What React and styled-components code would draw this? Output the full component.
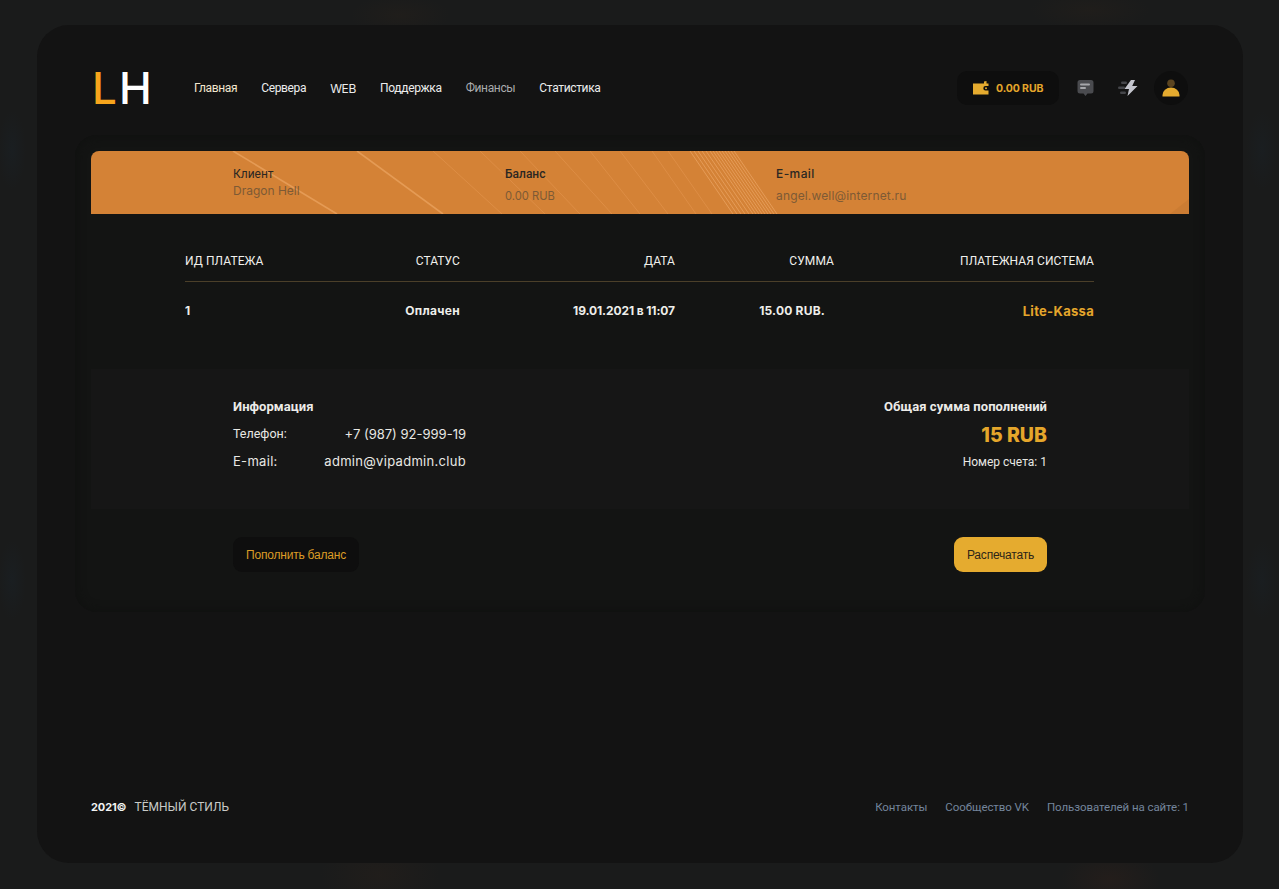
import React from "react";
import styled, { createGlobalStyle } from "styled-components";

const Global = createGlobalStyle`
  html, body {
    margin: 0;
    padding: 0;
    height: 100%;
  }
  body {
    background-color: #1a1b1b;
    background-image:
      radial-gradient(ellipse 60px 40px at 380px 875px, rgba(90, 50, 25, 0.1), transparent),
      radial-gradient(ellipse 50px 30px at 1110px 880px, rgba(100, 45, 25, 0.13), transparent),
      radial-gradient(ellipse 60px 20px at 1090px 10px, rgba(80, 50, 25, 0.1), transparent),
      radial-gradient(ellipse 50px 20px at 400px 15px, rgba(80, 50, 25, 0.1), transparent),
      radial-gradient(ellipse 14px 40px at 12px 150px, rgba(25, 50, 70, 0.14), transparent),
      radial-gradient(ellipse 14px 40px at 12px 580px, rgba(25, 50, 70, 0.14), transparent),
      radial-gradient(ellipse 16px 40px at 1262px 150px, rgba(25, 50, 70, 0.12), transparent),
      radial-gradient(ellipse 16px 40px at 1262px 580px, rgba(25, 50, 70, 0.12), transparent);
    background-repeat: no-repeat;
    font-family: Roboto, "Liberation Sans", sans-serif;
  }
`;

const Frame = styled.div`
  box-sizing: border-box;
  display: flex;
  flex-direction: column;
  width: 1206px;
  height: 838px;
  margin: 25px 0 26px 37px;
  padding: 46px 54px 0;
  background: #131313;
  border-radius: 32px;
`;

const Header = styled.header`
  display: flex;
  align-items: center;
  height: 34px;
`;

const Logo = styled.div`
  width: 103px;
  box-sizing: border-box;
  padding-left: 1px;
  font-family: Inter, sans-serif;
  font-size: 44px;
  font-weight: 500;
  line-height: 34px;
  letter-spacing: 2px;
  color: #fff;
  span {
    color: #f7a51c;
  }
`;

const Nav = styled.nav`
  display: flex;
  gap: 24px;
`;

const NavLink = styled.a`
  font-family: ${(p) => (p.$latin ? "Inter, sans-serif" : "Roboto, sans-serif")};
  font-size: 12px;
  letter-spacing: -0.35px;
  color: ${(p) => (p.$dim ? "#a9abad" : p.$active ? "#f3e7cf" : "#eceded")};
`;

const Tools = styled.div`
  display: flex;
  align-items: center;
  margin-left: auto;
  margin-right: 1px;
`;

const Wallet = styled.div`
  display: flex;
  align-items: center;
  gap: 7px;
  width: 102px;
  height: 34px;
  box-sizing: border-box;
  padding-left: 16px;
  background: #0e0e0e;
  border-radius: 10px;
  font-family: Inter, sans-serif;
  font-size: 10.5px;
  font-weight: 700;
  letter-spacing: -0.1px;
  color: #e5a62b;
`;

const ToolIcon = styled.div`
  display: flex;
  align-items: center;
  justify-content: center;
  width: ${(p) => p.$w}px;
  height: 34px;
`;

const Avatar = styled.div`
  display: flex;
  align-items: center;
  justify-content: center;
  width: 34px;
  height: 34px;
  margin-left: 9px;
  background: #0e0e0e;
  border-radius: 50%;
`;

const Panel = styled.section`
  display: flex;
  flex-direction: column;
  height: 477px;
  box-sizing: border-box;
  margin: 30px -16px 0;
  padding: 16px 16px 0;
  background: #131413;
  border-radius: 22px;
  box-shadow: inset 0 0 8px 2px #101110;
`;

const Banner = styled.div`
  position: relative;
  overflow: hidden;
  display: grid;
  grid-template-columns: 272px 271px 1fr;
  height: 63px;
  flex-shrink: 0;
  box-sizing: border-box;
  padding: 16px 0 0 142px;
  background: #d48236;
  border-radius: 8px 8px 0 0;
`;

const BannerArt = styled.svg`
  position: absolute;
  inset: 0;
  width: 100%;
  height: 100%;
`;

const BannerCol = styled.div`
  position: relative;
`;

const BannerLabel = styled.div`
  font-family: ${(p) => (p.$latin ? "Inter, sans-serif" : "Roboto, sans-serif")};
  font-size: 12px;
  line-height: 14px;
  letter-spacing: ${(p) => (p.$latin ? "0.4px" : "0")};
  font-weight: ${(p) => (p.$bold ? 500 : 400)};
  color: #2b2722;
`;

const BannerValue = styled.div`
  font-family: Inter, sans-serif;
  font-size: ${(p) => p.$size}px;
  line-height: 14px;
  letter-spacing: ${(p) => p.$ls || 0}px;
  margin-top: ${(p) => p.$mt}px;
  color: #7d5a35;
`;

const Table = styled.div`
  width: 909px;
  margin-left: 94px;
`;

const TableRow = styled.div`
  display: grid;
  grid-template-columns: 100px 175px 215px 159px 260px;
  align-items: center;
  height: ${(p) => p.$h}px;
  padding-top: ${(p) => p.$pt || 0}px;
  box-sizing: border-box;
  border-bottom: ${(p) => (p.$line ? "1px solid #4b3f29" : "none")};
`;

const HeadCell = styled.div`
  font-size: 12px;
  letter-spacing: 0.08px;
  color: #f0f0ec;
  white-space: nowrap;
  text-align: ${(p) => (p.$left ? "left" : "right")};
`;

const Cell = styled.div`
  font-family: Inter, sans-serif;
  font-size: ${(p) => (p.$accent ? 13 : 12)}px;
  font-weight: 700;
  letter-spacing: ${(p) => p.$ls || 0}px;
  white-space: nowrap;
  color: ${(p) => (p.$accent ? "#e5a62b" : "#eeeeea")};
  text-align: ${(p) => (p.$left ? "left" : "right")};
  padding-right: ${(p) => p.$pr || 0}px;
`;

const Info = styled.div`
  display: flex;
  justify-content: space-between;
  height: 140px;
  flex-shrink: 0;
  box-sizing: border-box;
  margin-top: 38px;
  padding: 30px 142px 0;
  background: #161616;
`;

const InfoLeft = styled.div`
  width: 233px;
`;

const InfoTitle = styled.div`
  font-size: 13px;
  font-weight: 700;
  line-height: 16px;
  letter-spacing: 0.05px;
  color: #ecebe8;
`;

const InfoRow = styled.div`
  display: flex;
  justify-content: space-between;
  align-items: center;
  height: 27px;
  font-family: ${(p) => (p.$latin ? "Inter, sans-serif" : "Roboto, sans-serif")};
  font-size: ${(p) => (p.$latin ? 13 : 12.5)}px;
  letter-spacing: ${(p) => (p.$latin ? 0.3 : 0)}px;
  color: #e8e8e4;
  &:nth-child(2) {
    margin-top: 5px;
  }
`;

const InfoValue = styled.span`
  font-family: Inter, sans-serif;
  font-size: 13px;
`;

const InfoRight = styled.div`
  text-align: right;
`;

const Total = styled.div`
  font-family: Inter, sans-serif;
  font-size: 19.5px;
  font-weight: 800;
  line-height: 24px;
  margin-top: 8px;
  color: #e5a62b;
`;

const Account = styled.div`
  font-size: 12px;
  line-height: 16px;
  margin-top: 7px;
  color: #e8e8e4;
`;

const Actions = styled.div`
  display: flex;
  justify-content: space-between;
  padding: 28px 142px 0;
`;

const Button = styled.button`
  height: 35px;
  width: ${(p) => p.$w}px;
  border: none;
  border-radius: 9px;
  padding: 0;
  font-family: "Liberation Sans", sans-serif;
  font-size: 12px;
  letter-spacing: -0.2px;
  color: ${(p) => (p.$primary ? "#2d2518" : "#dc9c26")};
  background: ${(p) => (p.$primary ? "#e5ab2f" : "#0e0e0e")};
`;

const Footer = styled.footer`
  display: flex;
  align-items: center;
  justify-content: space-between;
  margin-top: auto;
  height: 16px;
  margin-bottom: 48px;
  font-size: 12px;
`;

const Copy = styled.div`
  display: flex;
  align-items: center;
  gap: 8px;
  color: #c9cbc8;
  b {
    font-family: Inter, sans-serif;
    font-size: 11px;
    font-weight: 700;
    letter-spacing: -0.1px;
    color: #f2f2f2;
  }
`;

const FootLinks = styled.div`
  display: flex;
  gap: 18px;
  font-size: 11.5px;
  letter-spacing: -0.08px;
  color: #74859c;
`;

const WalletIcon = () => (
  <svg width="16" height="14" viewBox="0 0 16 14">
    <path d="M0 2.5 L11 2.5 L11 .5 L13.5 0 L13.5 2.5 L15.5 2.5 L15.5 5 L12.5 5 a2.2 2.2 0 0 0 0 4.4 L15.5 9.4 L15.5 13.5 L0 13.5 Z" fill="#e5ab2f" />
    <circle cx="13" cy="7.2" r="1" fill="#e5ab2f" />
  </svg>
);

const ChatIcon = () => (
  <svg width="17" height="19" viewBox="0 0 17 19">
    <path d="M3 1 H14 a2.5 2.5 0 0 1 2.5 2.5 V12 a2.5 2.5 0 0 1 -2.5 2.5 H10.5 L8.5 17 L6.5 14.5 H3 A2.5 2.5 0 0 1 .5 12 V3.5 A2.5 2.5 0 0 1 3 1 Z" fill="#4a4b4f" />
    <rect x="3" y="4.5" width="10" height="2" rx="1" fill="#a6a7ab" />
    <rect x="3" y="8" width="6" height="2" rx="1" fill="#a6a7ab" />
  </svg>
);

const BoltIcon = () => (
  <svg width="20" height="16" viewBox="0 0 20 16">
    <rect x="3" y="1.5" width="6" height="2.4" rx="1.2" fill="#45464a" />
    <rect x="0" y="6.5" width="7" height="2.4" rx="1.2" fill="#45464a" />
    <rect x="2" y="11.5" width="6" height="2.4" rx="1.2" fill="#45464a" />
    <path d="M13 0 L6.5 9 H11 L9.5 16 L19.5 6 H14.2 L17 0 Z" fill="#c4c5cd" />
  </svg>
);

const UserIcon = () => (
  <svg width="18" height="18" viewBox="0 0 18 18">
    <circle cx="9" cy="4.2" r="3.8" fill="#5c4520" />
    <path d="M.5 17.5 V16 A8.5 7.5 0 0 1 17.5 16 V17.5 Z" fill="#e5ab2f" />
  </svg>
);

const bundle = [690, 694, 698, 702, 706, 710, 713, 716, 719, 722, 725, 728, 731, 734];
const thin = [[433, 502], [480, 545], [520, 580], [555, 612], [590, 640], [620, 668], [652, 696], [668, 712]];

const Art = () => (
  <BannerArt viewBox="0 0 1098 63" preserveAspectRatio="none">
    <path d="M142 0 L246 63" stroke="#e59b55" strokeWidth="1.6" fill="none" />
    <path d="M266 0 L352 63" stroke="#e59b55" strokeWidth="1.6" fill="none" />
    {thin.map(([a, b]) => (
      <path key={a} d={`M${a - 91} 0 L${b - 91} 63`} stroke="#df9049" strokeWidth="0.8" fill="none" />
    ))}
    {bundle.map((a) => (
      <path key={a} d={`M${a - 91} 0 L${a - 48} 63`} stroke="#e59c58" strokeWidth="1" fill="none" />
    ))}
    <path d="M1079 63 L1098 48 V63 Z" fill="#cb7c33" />
  </BannerArt>
);

const App = () => {
  return (
    <>
      <Global />
      <Frame>
        <Header>
          <Logo>
            <span>L</span>H
          </Logo>
          <Nav>
            <NavLink $active>Главная</NavLink>
            <NavLink>Сервера</NavLink>
            <NavLink $latin>WEB</NavLink>
            <NavLink>Поддержка</NavLink>
            <NavLink $dim>Финансы</NavLink>
            <NavLink>Статистика</NavLink>
          </Nav>
          <Tools>
            <Wallet>
              <WalletIcon />
              0.00 RUB
            </Wallet>
            <ToolIcon $w={52}>
              <ChatIcon />
            </ToolIcon>
            <ToolIcon $w={34}>
              <BoltIcon />
            </ToolIcon>
            <Avatar>
              <UserIcon />
            </Avatar>
          </Tools>
        </Header>

        <Panel>
          <Banner>
            <Art />
            <BannerCol>
              <BannerLabel>Клиент</BannerLabel>
              <BannerValue $mt={3} $size={12}>Dragon Hell</BannerValue>
            </BannerCol>
            <BannerCol>
              <BannerLabel $bold>Баланс</BannerLabel>
              <BannerValue $mt={8} $size={11.2}>0.00 RUB</BannerValue>
            </BannerCol>
            <BannerCol>
              <BannerLabel $bold $latin>E-mail</BannerLabel>
              <BannerValue $mt={8} $size={12} $ls={0.15}>angel.well@internet.ru</BannerValue>
            </BannerCol>
          </Banner>

          <Table>
            <TableRow $h={68} $pt={26} $line>
              <HeadCell $left>ИД ПЛАТЕЖА</HeadCell>
              <HeadCell>СТАТУС</HeadCell>
              <HeadCell>ДАТА</HeadCell>
              <HeadCell>СУММА</HeadCell>
              <HeadCell>ПЛАТЕЖНАЯ СИСТЕМА</HeadCell>
            </TableRow>
            <TableRow $h={49} $pt={8}>
              <Cell $left>1</Cell>
              <Cell $ls={0.3}>Оплачен</Cell>
              <Cell $ls={-0.1}>19.01.2021 в 11:07</Cell>
              <Cell $pr={9} $ls={0.2}>15.00 RUB.</Cell>
              <Cell $accent $ls={0.3}>Lite-Kassa</Cell>
            </TableRow>
          </Table>

          <Info>
            <InfoLeft>
              <InfoTitle>Информация</InfoTitle>
              <InfoRow>
                Телефон:
                <InfoValue>+7 (987) 92-999-19</InfoValue>
              </InfoRow>
              <InfoRow $latin>
                E-mail:
                <InfoValue>admin@vipadmin.club</InfoValue>
              </InfoRow>
            </InfoLeft>
            <InfoRight>
              <InfoTitle>Общая сумма пополнений</InfoTitle>
              <Total>15 RUB</Total>
              <Account>Номер счета: 1</Account>
            </InfoRight>
          </Info>

          <Actions>
            <Button $w={126}>Пополнить баланс</Button>
            <Button $w={93} $primary>Распечатать</Button>
          </Actions>
        </Panel>

        <Footer>
          <Copy>
            <b>2021©</b>
            ТЁМНЫЙ СТИЛЬ
          </Copy>
          <FootLinks>
            <span>Контакты</span>
            <span>Сообщество VK</span>
            <span>Пользователей на сайте: 1</span>
          </FootLinks>
        </Footer>
      </Frame>
    </>
  );
};

export default App;
